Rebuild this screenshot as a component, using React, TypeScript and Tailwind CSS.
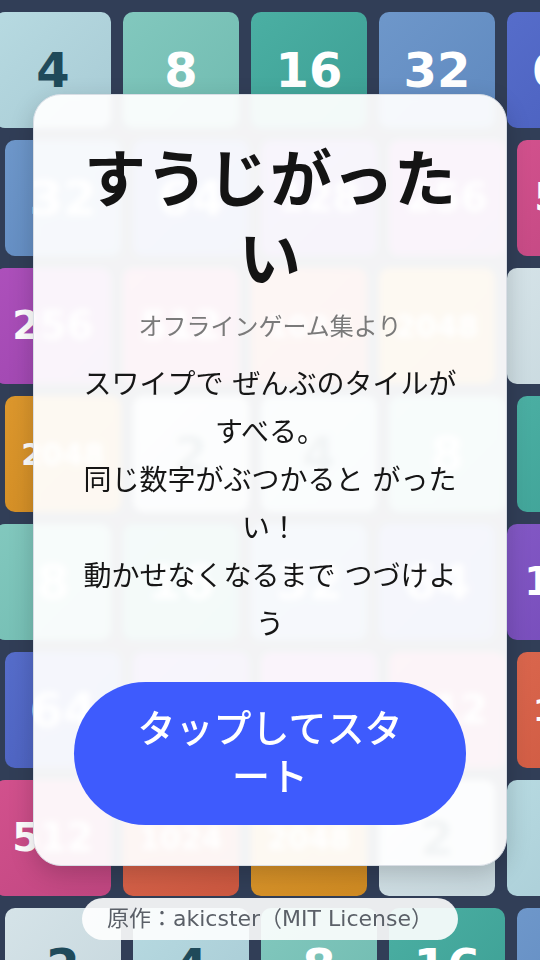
import React from "react";

const VALUES = [2, 4, 8, 16, 32, 64, 128, 256, 512, 1024, 2048];

const TILE_STYLE: Record<number, string> = {
  2: "from-[#d5e3e8] to-[#c6d7dd] text-[#1f4a5a]",
  4: "from-[#b7dae1] to-[#a8cbd5] text-[#1f4a5a]",
  8: "from-[#82c8be] to-[#70bbb0] text-white",
  16: "from-[#4bafa3] to-[#3c9f94] text-white",
  32: "from-[#6e97ca] to-[#5f89bf] text-white",
  64: "from-[#566dca] to-[#4a5fbe] text-white",
  128: "from-[#8358c5] to-[#744ab8] text-white",
  256: "from-[#ad50bb] to-[#9c45ae] text-white",
  512: "from-[#d2518d] to-[#bf4680] text-white",
  1024: "from-[#da664d] to-[#cc5840] text-white",
  2048: "from-[#dc972d] to-[#cf8a22] text-white",
};

function sizeFor(v: number) {
  const d = String(v).length;
  if (d <= 2) return "text-[48px]";
  if (d === 3) return "text-[39px]";
  return "text-[30px]";
}

function Tile({ v }: { v: number }) {
  return (
    <div
      className={`flex h-[116px] w-[116px] shrink-0 items-center justify-center rounded-[10px] bg-linear-to-br font-bold ${TILE_STYLE[v]} ${sizeFor(v)}`}
      style={{ fontFamily: '"DejaVu Sans", sans-serif' }}
    >
      {v}
    </div>
  );
}

const ROWS = Array.from({ length: 8 }, (_, r) => {
  const start = (1 + 3 * r) % 11;
  return Array.from({ length: 5 }, (_, i) => VALUES[(start + i) % 11]);
});

export default function App() {
  return (
    <div
      className="relative h-[960px] w-[540px] overflow-hidden bg-[#313e57]"
      style={{ fontFamily: '"DejaVu Sans", "Noto Sans CJK JP", sans-serif' }}
    >
      <div className="flex flex-col gap-3 pt-3">
        {ROWS.map((row, r) => (
          <div
            key={r}
            className={`flex gap-3 ${r % 2 === 0 ? "-ml-[5px]" : "ml-[5px]"}`}
          >
            {row.map((v, i) => (
              <Tile key={i} v={v} />
            ))}
          </div>
        ))}
      </div>

      <div className="absolute inset-0 flex items-center justify-center">
        <div className="flex w-[474px] flex-col items-center rounded-[28px] border border-[#d9dee5] bg-white/[0.94] px-10 pb-10 pt-[46px] text-center shadow-[0_8px_24px_rgba(0,0,0,0.18)] backdrop-blur-[3px]">
          <h1 className="text-[62px] font-bold leading-[80px] text-[#141414]">
            すうじがったい
          </h1>
          <p className="mt-[8px] text-[24px] leading-[36px] text-[#7a7a7a]">
            オフラインゲーム集より
          </p>
          <p className="mt-4 text-[28px] leading-[48px] text-[#161616]">
            スワイプで ぜんぶのタイルがすべる。
            <br />
            同じ数字がぶつかると がったい！
            <br />
            動かせなくなるまで つづけよう
          </p>
          <button className="mt-[33px] w-full rounded-full bg-[#3e5bfd] px-14 py-6 text-[38px] font-medium leading-[1.25] text-white">
            タップしてスタート
          </button>
        </div>
      </div>

      <div className="absolute bottom-5 left-0 right-0 flex justify-center">
        <div className="rounded-full bg-white/90 px-[25px] py-[6px] text-[22px] leading-[30px] text-[#5b6068]">
          原作：akicster（MIT License）
        </div>
      </div>
    </div>
  );
}
